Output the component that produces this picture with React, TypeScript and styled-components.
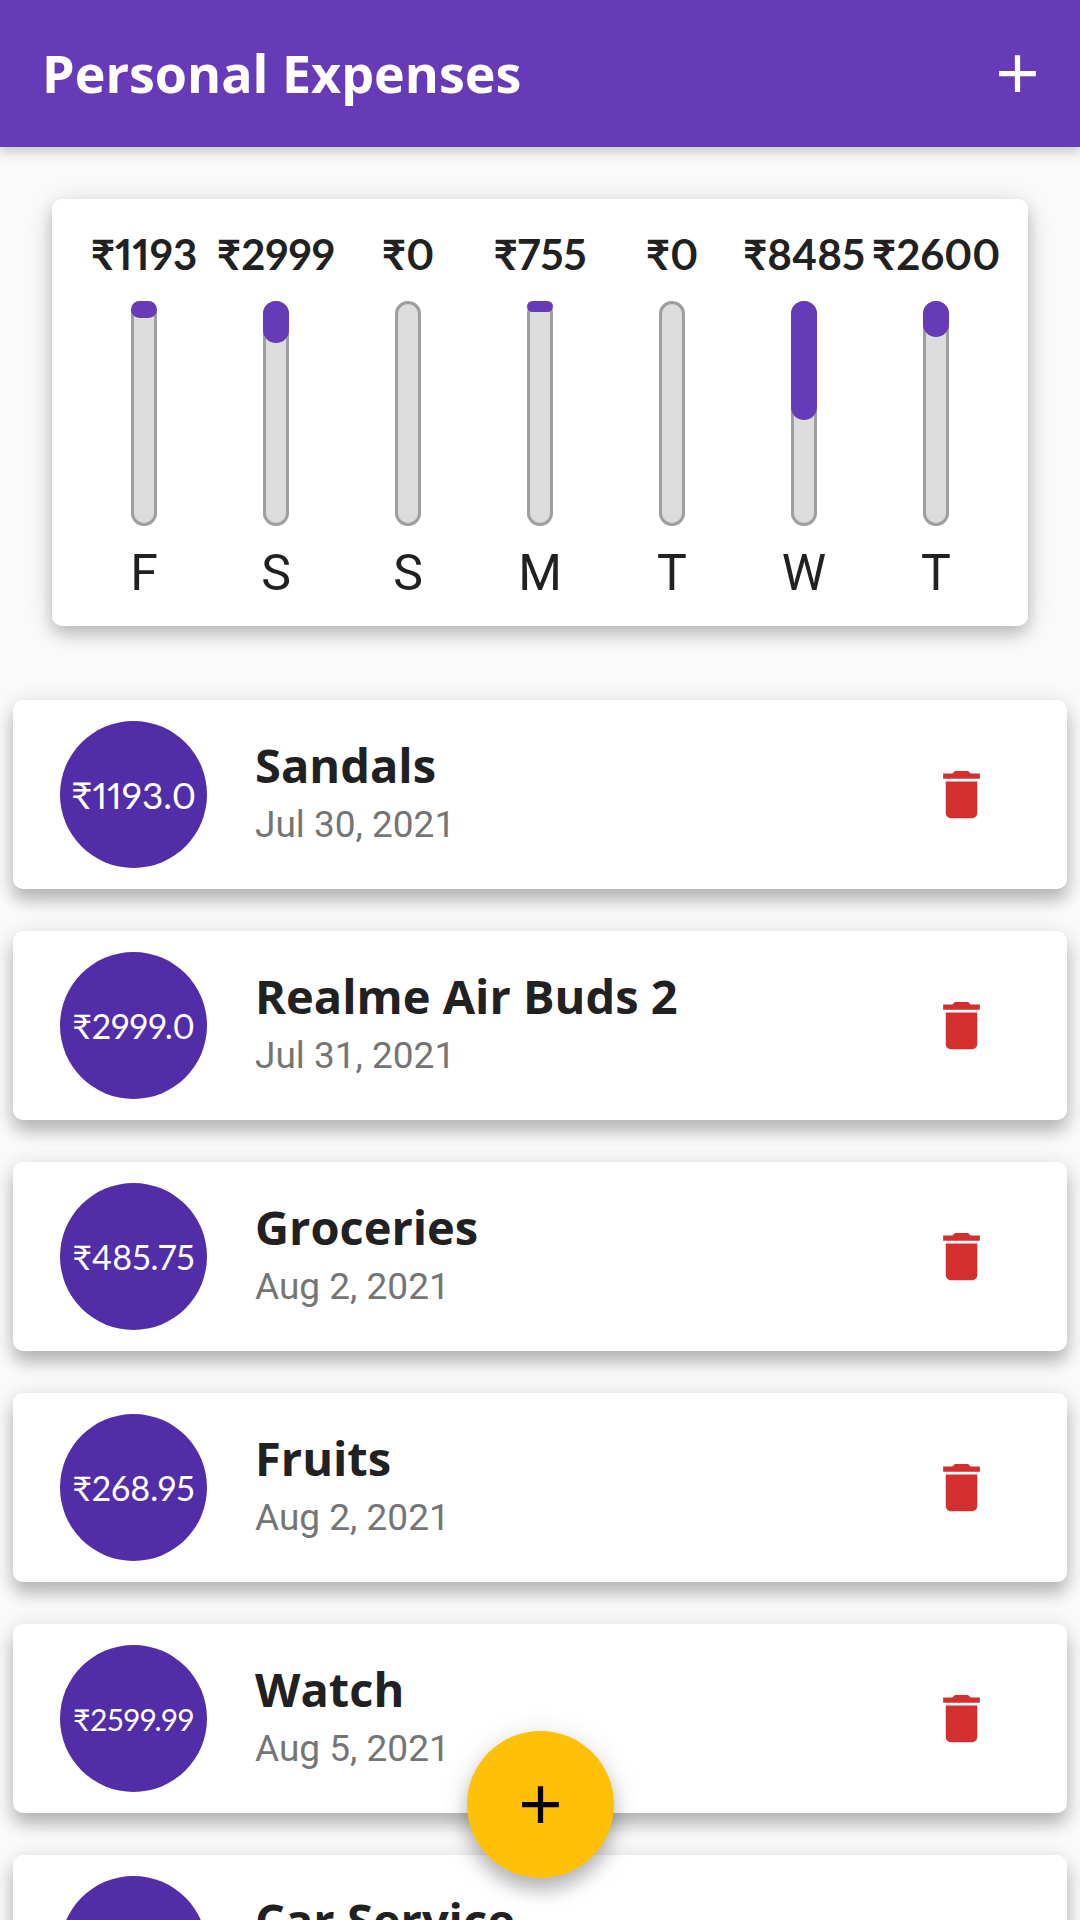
import React from "react";
import styled, { createGlobalStyle } from "styled-components";

const GlobalStyle = createGlobalStyle`
  *, *::before, *::after { box-sizing: border-box; }
  body { margin: 0; background: #fafafa; }
`;

const textFont = `Roboto, "Liberation Sans", sans-serif`;
const titleFont = `"Open Sans", "Noto Sans", sans-serif`;
const amountFont = `Lato, "Noto Sans", sans-serif`;

const Screen = styled.div`
  display: flex;
  flex-direction: column;
  height: 100vh;
  background: #fafafa;
  color: #212121;
  font-family: ${textFont};
`;

const AppBar = styled.header`
  flex: none;
  display: flex;
  align-items: center;
  justify-content: space-between;
  height: 147px;
  padding: 0 31px 0 42px;
  background: #673ab7;
  color: #fff;
  box-shadow: 0 4px 10px rgba(0, 0, 0, 0.16), 0 2px 20px rgba(0, 0, 0, 0.1);
  z-index: 1;
`;

const AppTitle = styled.h1`
  margin: 0;
  padding-bottom: 2px;
  font: 700 52px/72px ${titleFont};
`;

const IconButton = styled.button`
  display: flex;
  padding: 0;
  border: 0;
  background: none;
  color: inherit;
  cursor: pointer;
`;

const DeleteButton = styled(IconButton)`
  margin-left: auto;
  color: #d32f2f;
`;

const Content = styled.main`
  flex: 1;
  min-height: 0;
  overflow-y: auto;
  scrollbar-width: none;
`;

const Card = styled.div`
  border-radius: 10px;
  background: #fff;
`;

const ChartCard = styled(Card)`
  display: flex;
  margin: 52px 52px 0;
  padding: 26px 26px 24px;
  box-shadow: 0 8px 16px rgba(0, 0, 0, 0.2), 0 4px 30px rgba(0, 0, 0, 0.12);
`;

const Day = styled.div`
  flex: 1 1 0;
  min-width: 0;
  display: flex;
  flex-direction: column;
  align-items: center;
`;

const DayAmount = styled.div`
  font: 700 42px/58px ${amountFont};
  font-variant-numeric: proportional-nums;
  white-space: nowrap;
`;

const Track = styled.div`
  width: 26px;
  height: 225px;
  margin: 18px 0;
  border-radius: 13px;
  background: #dcdcdc;
  box-shadow: inset 0 0 0 3px #9e9e9e;
`;

const Fill = styled.div`
  border-radius: 13px;
  background: #673ab7;
`;

const DayName = styled.div`
  font-size: 50px;
  line-height: 58px;
`;

const List = styled.ul`
  margin: 74px 13px 42px;
  padding: 0;
  display: grid;
  gap: 42px;
  list-style: none;
`;

const Row = styled(Card).attrs({ as: "li" })`
  display: flex;
  align-items: center;
  height: 189px;
  padding: 0 74px 0 47px;
  box-shadow: 0 12px 16px rgba(0, 0, 0, 0.2), 0 4px 24px rgba(0, 0, 0, 0.14);
`;

const Badge = styled.div<{ $size: number }>`
  flex: none;
  display: flex;
  align-items: center;
  justify-content: center;
  width: 147px;
  height: 147px;
  margin-right: 48px;
  border-radius: 50%;
  background: #512da8;
  color: #fff;
  font: 400 ${(p) => p.$size}px/48px ${amountFont};
  font-variant-numeric: proportional-nums;
  white-space: nowrap;
`;

const Name = styled.h2`
  margin: 0;
  font: 700 47px/60px ${titleFont};
`;

const When = styled.div`
  color: #757575;
  font-size: 37px;
  line-height: 60px;
`;

const AddFab = styled(IconButton)`
  position: fixed;
  left: 50%;
  bottom: 42px;
  z-index: 2;
  align-items: center;
  justify-content: center;
  width: 147px;
  height: 147px;
  margin-left: -73px;
  border-radius: 50%;
  background: #ffc107;
  color: #000;
  box-shadow: 0 12px 18px rgba(0, 0, 0, 0.22), 0 6px 32px rgba(0, 0, 0, 0.14);
`;

const PlusIcon = () => (
  <svg width="63" height="63" viewBox="0 0 24 24" fill="currentColor" aria-hidden="true">
    <path d="M19 13h-6v6h-2v-6H5v-2h6V5h2v6h6v2z" />
  </svg>
);

const TrashIcon = () => (
  <svg width="63" height="63" viewBox="0 0 24 24" fill="currentColor" aria-hidden="true">
    <path d="M6 19c0 1.1.9 2 2 2h8c1.1 0 2-.9 2-2V7H6v12zM19 4h-3.5l-1-1h-5l-1 1H5v2h14V4z" />
  </svg>
);

const week = [
  { day: "F", total: 1193 },
  { day: "S", total: 2999 },
  { day: "S", total: 0 },
  { day: "M", total: 755 },
  { day: "T", total: 0 },
  { day: "W", total: 8485 },
  { day: "T", total: 2600 },
];

const weekTotal = week.reduce((sum, d) => sum + d.total, 0);

const expenses = [
  { name: "Sandals", date: "Jul 30, 2021", amount: "1193.0" },
  { name: "Realme Air Buds 2", date: "Jul 31, 2021", amount: "2999.0" },
  { name: "Groceries", date: "Aug 2, 2021", amount: "485.75" },
  { name: "Fruits", date: "Aug 2, 2021", amount: "268.95" },
  { name: "Watch", date: "Aug 5, 2021", amount: "2599.99" },
  { name: "Car Service", date: "Aug 4, 2021", amount: "8485.0" },
];

// The digits fill the circle: long amounts get smaller ones, and amounts
// with several narrow 1s get larger ones.
const amountSize = (amount: string) => {
  if (amount.length > 6) return 30;
  return amount.split("1").length > 2 ? 37 : 34;
};

export default function App() {
  return (
    <Screen>
      <GlobalStyle />
      <AppBar>
        <AppTitle>Personal Expenses</AppTitle>
        <IconButton type="button" aria-label="Add expense">
          <PlusIcon />
        </IconButton>
      </AppBar>
      <Content>
        <ChartCard>
          {week.map((d, i) => (
            <Day key={i}>
              <DayAmount>₹{d.total}</DayAmount>
              <Track>
                <Fill style={{ height: `${(d.total / weekTotal) * 100}%` }} />
              </Track>
              <DayName>{d.day}</DayName>
            </Day>
          ))}
        </ChartCard>
        <List>
          {expenses.map((e) => (
            <Row key={e.name}>
              <Badge $size={amountSize(e.amount)}>₹{e.amount}</Badge>
              <div>
                <Name>{e.name}</Name>
                <When>{e.date}</When>
              </div>
              <DeleteButton type="button" aria-label={`Delete ${e.name}`}>
                <TrashIcon />
              </DeleteButton>
            </Row>
          ))}
        </List>
      </Content>
      <AddFab type="button" aria-label="Add expense">
        <PlusIcon />
      </AddFab>
    </Screen>
  );
}
